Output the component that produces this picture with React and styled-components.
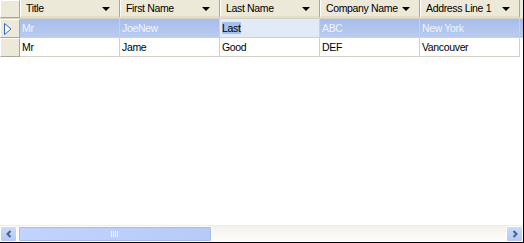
import React from "react";
import styled, { createGlobalStyle } from "styled-components";

const Global = createGlobalStyle`
  html, body { margin: 0; padding: 0; background: #fff; }
  body { font-family: "Liberation Sans", Arial, sans-serif; font-size: 10.5px; letter-spacing: -0.35px; }
`;

const Frame = styled.div`
  width: 524px;
  height: 243px;
  box-sizing: border-box;
  border-right: 1px solid #000;
  border-bottom: 1px solid #000;
  display: flex;
  flex-direction: column;
  background: #fff;
  overflow: hidden;
`;

const Body = styled.div`
  flex: 1;
  display: flex;
  flex-direction: column;
  min-height: 0;
`;

const Row = styled.div`
  display: grid;
  grid-template-columns: 20px repeat(5, 100px) 1fr;
  height: ${(p) => p.$h}px;
`;

const HeaderRow = styled(Row)`
  background: #ece9d8;
  border-bottom: 1px solid #d6d2c2;
  box-sizing: border-box;
`;

const HeadCell = styled.div`
  display: flex;
  align-items: center;
  justify-content: space-between;
  padding: 0 9px 0 5px;
  box-sizing: border-box;
  border-left: 1px solid #fff;
  border-right: 1px solid #aca899;
  border-bottom: 2px solid #e2dec9;
  color: #000;
  white-space: nowrap;
`;

const Corner = styled.div`
  background: #ece9d8;
  border-left: 1px solid #fff;
  border-top: 1px solid #fff;
  border-right: 1px solid #aca899;
  border-bottom: 1px solid #aca899;
  box-sizing: border-box;
`;

const Arrow = styled.span`
  width: 0;
  height: 0;
  border-left: 4px solid transparent;
  border-right: 4px solid transparent;
  border-top: 4px solid #000;
  margin-top: 2px;
  flex-shrink: 0;
`;

const Selector = styled.div`
  background: #ece9d8;
  border-left: 1px solid #fff;
  border-top: 1px solid #fff;
  border-right: 1px solid #aca899;
  border-bottom: 1px solid #aca899;
  box-sizing: border-box;
  display: flex;
  align-items: center;
  padding-left: 3px;
`;

const Cell = styled.div`
  display: flex;
  align-items: center;
  padding-left: 2px;
  box-sizing: border-box;
  border-right: 1px solid #d4d0c8;
  border-bottom: 1px solid #d4d0c8;
  white-space: nowrap;
  overflow: hidden;
  color: ${(p) => (p.$sel ? "#f0f4ff" : "#000")};
  background: ${(p) =>
    p.$edit
      ? "#e3eaf7"
      : p.$sel
      ? "linear-gradient(#a7bdea, #b9cbef)"
      : "#fff"};
`;

const Fill = styled.div`
  background: ${(p) => (p.$sel ? "linear-gradient(#a7bdea, #b9cbef)" : "transparent")};
  border-bottom: ${(p) => (p.$sel ? "1px solid #d4d0c8" : "none")};
`;

const Highlight = styled.span`
  background: #a6c0ef;
  color: #000;
  padding: 0 1px 0 0;
`;

const Scroll = styled.div`
  height: 17px;
  display: flex;
  background: linear-gradient(#f3f1ea, #fefefd);
  border-top: 1px solid #eeede5;
  box-sizing: border-box;
`;

const ScrollBtn = styled.div`
  width: 17px;
  height: 16px;
  box-sizing: border-box;
  border: 1px solid #fff;
  border-radius: 2px;
  background: linear-gradient(#cbdafc, #b2c8f6);
  display: flex;
  align-items: center;
  justify-content: center;
`;

const Track = styled.div`
  flex: 1;
  display: flex;
  padding-left: 1px;
`;

const Thumb = styled.div`
  width: 194px;
  height: 16px;
  box-sizing: border-box;
  border: 1px solid #fff;
  outline: 1px solid #a4bcec;
  outline-offset: -2px;
  border-radius: 2px;
  background: linear-gradient(90deg, #c2d3fc, #b7cbf9);
  display: flex;
  align-items: center;
  justify-content: center;
`;

const columns = ["Title", "First Name", "Last Name", "Company Name", "Address Line 1"];
const rows = [
  ["Mr", "JoeNew", "Last", "ABC", "New York"],
  ["Mr", "Jame", "Good", "DEF", "Vancouver"],
];

export default function App() {
  return (
    <>
      <Global />
      <Frame>
        <Body>
          <HeaderRow $h={19}>
            <Corner />
            {columns.map((c) => (
              <HeadCell key={c}>
                <span>{c}</span>
                <Arrow />
              </HeadCell>
            ))}
            <div />
          </HeaderRow>
          {rows.map((r, i) => (
            <Row key={i} $h={19}>
              <Selector>
                {i === 0 && (
                  <svg width="8" height="12" viewBox="0 0 8 12">
                    <path d="M0.5 0.5 L7 6 L0.5 11.5 Z" fill="#fff" stroke="#3169c6" strokeWidth="1" />
                  </svg>
                )}
              </Selector>
              {r.map((v, j) => (
                <Cell key={j} $sel={i === 0} $edit={i === 0 && j === 2}>
                  {i === 0 && j === 2 ? <Highlight>{v}</Highlight> : v}
                </Cell>
              ))}
              <Fill $sel={i === 0} />
            </Row>
          ))}
        </Body>
        <Scroll>
          <ScrollBtn>
            <svg width="8" height="8" viewBox="0 0 8 8">
              <path d="M5.5 1 L2.5 4 L5.5 7" fill="none" stroke="#4d6185" strokeWidth="2" />
            </svg>
          </ScrollBtn>
          <Track>
            <Thumb>
              <svg width="8" height="6" viewBox="0 0 8 6">
                {[0.5, 2.5, 4.5, 6.5].map((x) => (
                  <line key={x} x1={x} y1="0" x2={x} y2="6" stroke="#eef3ff" strokeWidth="1" />
                ))}
              </svg>
            </Thumb>
          </Track>
          <ScrollBtn>
            <svg width="8" height="8" viewBox="0 0 8 8">
              <path d="M2.5 1 L5.5 4 L2.5 7" fill="none" stroke="#4d6185" strokeWidth="2" />
            </svg>
          </ScrollBtn>
        </Scroll>
      </Frame>
    </>
  );
}
